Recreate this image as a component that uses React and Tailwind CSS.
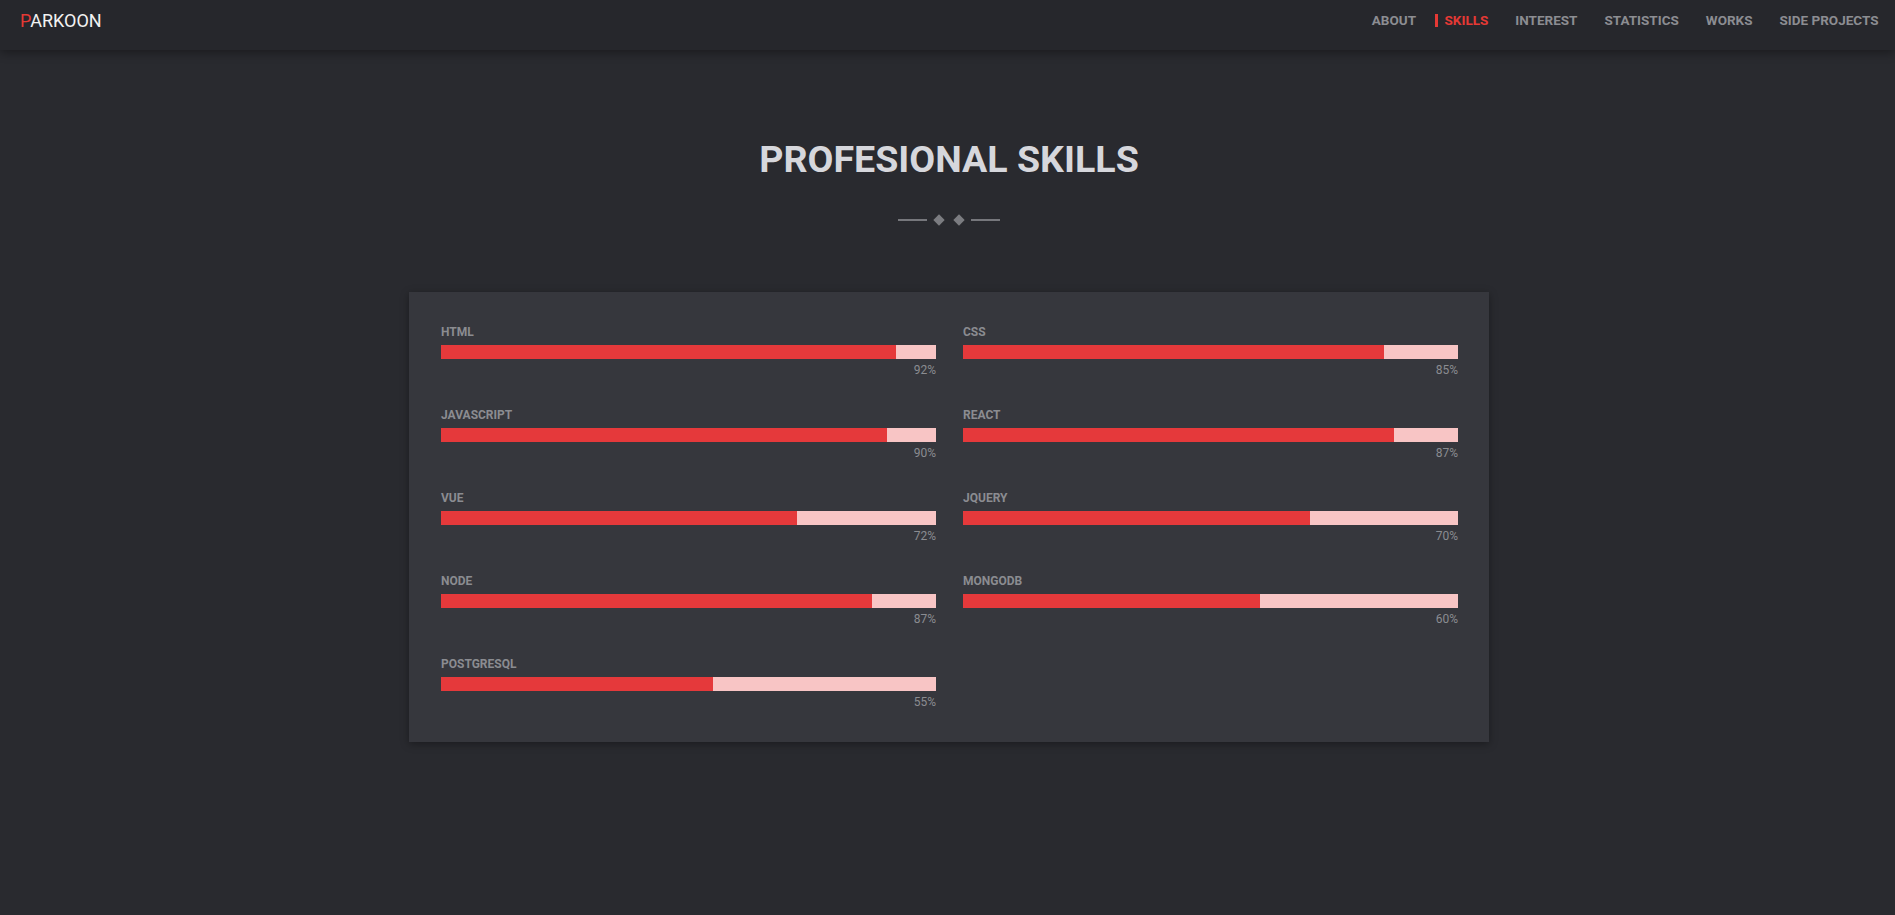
const navItems = ['ABOUT', 'SKILLS', 'INTEREST', 'STATISTICS', 'WORKS', 'SIDE PROJECTS'];

const skills = [
  { name: 'HTML', value: 92 },
  { name: 'CSS', value: 85 },
  { name: 'JAVASCRIPT', value: 90 },
  { name: 'REACT', value: 87 },
  { name: 'VUE', value: 72 },
  { name: 'JQUERY', value: 70 },
  { name: 'NODE', value: 87 },
  { name: 'MONGODB', value: 60 },
  { name: 'POSTGRESQL', value: 55 },
];

function Header() {
  return (
    <header className="relative z-10 h-[50px] pb-[9px] flex items-center justify-between bg-[#26272c] shadow-[0_2px_10px_rgba(0,0,0,0.4)]">
      <div className="pl-[20px] text-[18px] leading-none text-[#f2f2f2]">
        <span className="text-[#e53935]">P</span>ARKOON
      </div>
      <nav className="flex items-center pr-[3px]">
        {navItems.map((item) =>
          item === 'SKILLS' ? (
            <a key={item} className="flex items-center pl-[5px] pr-[13.5px] text-[13.5px] font-bold text-[#e53935] cursor-pointer">
              <span className="w-[3px] h-[13px] bg-[#e53935] mr-[7px]" />
              {item}
            </a>
          ) : (
            <a key={item} className="px-[13.5px] text-[13.5px] font-bold text-[#8c8d92] cursor-pointer hover:text-[#e53935]">
              {item}
            </a>
          )
        )}
      </nav>
    </header>
  );
}

function SkillBar({ name, value }) {
  return (
    <div>
      <div className="text-[12px] leading-[16px] font-bold text-[#8b8c91]">{name}</div>
      <div className="mt-[5px] h-[14px] bg-[#f8c5c5]">
        <div className="h-full bg-[#e5393b]" style={{ width: `${value}%` }} />
      </div>
      <div className="mt-[3px] text-right text-[12px] leading-[16px] text-[#8b8c91]">{value}%</div>
    </div>
  );
}

export default function App() {
  return (
    <div className="min-h-screen bg-[#292a2f]" style={{ fontFamily: 'Roboto, "Liberation Sans", sans-serif' }}>
      <Header />

      <section className="pl-[3px] pt-[86px] pb-[60px] flex flex-col items-center">
        <h2 className="text-[37.6px] leading-[46px] font-bold text-[#d6d7dc]">PROFESIONAL SKILLS</h2>

        <div className="mt-[34px] flex items-center h-[8px]">
          <span className="w-[29px] h-[2px] bg-[#76777c]" />
          <span className="ml-[8px] w-[8px] h-[8px] rotate-45 bg-[#7b7c81]" />
          <span className="ml-[12px] w-[8px] h-[8px] rotate-45 bg-[#7b7c81]" />
          <span className="ml-[8px] w-[29px] h-[2px] bg-[#76777c]" />
        </div>

        <div className="mt-[68px] w-[1080px] bg-[#36373d] pl-[32px] pr-[31px] py-[32px] shadow-[0_2px_8px_rgba(0,0,0,0.35)]">
          <div className="grid grid-cols-2 gap-x-[27px] gap-y-[29px]">
            {skills.map((s) => (
              <SkillBar key={s.name} name={s.name} value={s.value} />
            ))}
          </div>
        </div>
      </section>
    </div>
  );
}
